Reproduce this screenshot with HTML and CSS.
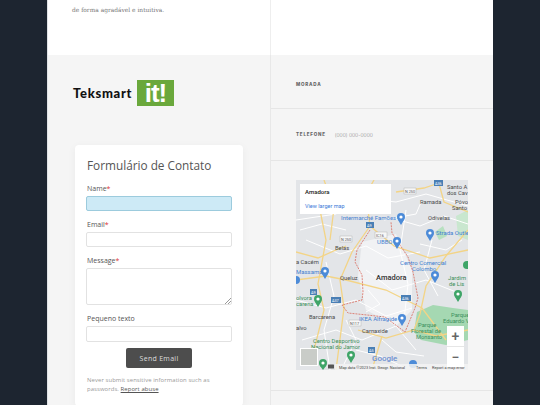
FILE: index.html
```html
<!DOCTYPE html>
<html lang="pt">

<head>
    <meta charset="UTF-8">
    <meta name="viewport" content="width=device-width, initial-scale=1.0">
    <title>Formulário de Contato</title>
    <link rel="stylesheet" href="styles.css">
</head>

<body>
    <div class="page">
        <div class="intro">
            <p class="intro-text">de forma agradável e intuitiva.</p>
        </div>
        <div class="intro intro-empty"></div>

        <div class="contact">
            <div class="logo">
                <span class="logo-name">Teksmart</span>
                <span class="logo-badge">it!</span>
            </div>
            <form class="card">
                <h2 class="card-title">Formulário de Contato</h2>
                <label class="field-label">Name<span class="req">*</span></label>
                <div class="input"></div>
                <label class="field-label">Email<span class="req">*</span></label>
                <div class="input input-plain"></div>
                <label class="field-label">Message<span class="req">*</span></label>
                <div class="input input-area">
                    <svg class="grip" width="6" height="6" viewBox="0 0 6 6">
                        <path d="M0 6L6 0M3 6L6 3" stroke="#999" stroke-width="1" />
                    </svg>
                </div>
                <label class="field-label">Pequeno texto</label>
                <div class="input input-small"></div>
                <div class="send-row"><button class="send-btn" type="button">Send Email</button></div>
                <p class="note">Never submit sensitive information such as passwords. <a href="#">Report abuse</a></p>
            </form>
        </div>

        <div class="details">
            <div class="info-row info-first"><span class="info-label">MORADA</span></div>
            <div class="info-row"><span class="info-label">TELEFONE</span><span class="info-value">(000) 000-0000</span></div>
            <div class="map-row">
                <div class="map">
                    <svg class="map-art" width="172" height="190" viewBox="0 0 172 190">
                        <rect width="172" height="190" fill="#e3e5e8" />
                        <!-- parques -->
                        <path d="M118 152L121 132L137 125L157 128L172 130V160L150 165L125 160Z" fill="#a5d8b2" />
                        <path d="M139 52L147 46L151 56L143 60Z" fill="#b7e0c0" />
                        <path d="M160 36L172 30V60L162 56Z" fill="#c9e7cf" />
                        <path d="M66 62L100 54L116 90L116 130L100 146L70 130L62 96Z" fill="#f1f2f4" />
                        <!-- ruas pequenas -->
                        <g fill="none" stroke="#fff" stroke-width="1">
                            <path d="M0 40L40 34L62 18L100 22L130 14L172 26" />
                            <path d="M96 38L124 46L148 36L172 44" />
                            <path d="M10 60L44 74L70 66L92 78L124 72" />
                            <path d="M0 120L30 128L60 120L90 136L116 128" />
                            <path d="M6 160L40 150L66 160L100 146L120 170" />
                            <path d="M70 90L96 110L130 100L160 112" />
                            <path d="M110 30L104 70L112 104L108 140" />
                            <path d="M30 82L38 116L28 150L34 190" />
                            <path d="M136 60L128 90L142 116" />
                            <path d="M60 170L84 176L110 188" />
                            <path d="M88 40L120 34L126 20" />
                            <path d="M4 50L26 44L50 50" />
                            <path d="M72 110L84 124L70 132" />
                            <path d="M124 64L150 70L166 60" />
                            <path d="M50 140L60 160L48 184" />
                            <path d="M86 160L100 172L128 176" />
                        </g>
                        <!-- estradas -->
                        <g fill="none" stroke="#f3d486" stroke-width="1.3">
                            <path d="M74 46L70 14L78 0" />
                            <path d="M74 46L56 72L44 100L48 128L40 190" />
                            <path d="M74 46L86 56L98 66L134 78L172 70" />
                            <path d="M0 72L22 78L40 70L50 66" />
                            <path d="M0 100L30 96L50 100L90 110L126 128L150 160" />
                            <path d="M142 0L148 22L172 32" />
                            <path d="M100 12L128 8L140 4" />
                            <path d="M172 50L150 76L130 106L124 134L118 150" />
                            <path d="M24 30L30 60L22 104L28 130L18 170" />
                            <path d="M62 150L90 158L118 150L140 156L172 150" />
                            <path d="M86 156L76 190" />
                            <path d="M28 0L38 28L34 60" />
                        </g>
                        <!-- limite de Amadora -->
                        <path d="M74 50L61 70L59 82L66 95L67 112L66 120L46 125L52 133L71 135L89 137L109 152L119 128L122 118L117 92L112 77L104 65L96 53L95 42" fill="none" stroke="#d9695c" stroke-width="0.8" stroke-dasharray="2 1" />
                        <!-- sinais -->
                        <g class="map-shield">
                            <rect x="138" y="0" width="9" height="6" fill="#4a7fb5" />
                            <rect x="70" y="42" width="8" height="6" fill="#4a7fb5" />
                            <rect x="35" y="117" width="10" height="6" fill="#4a7fb5" />
                            <rect x="105" y="115" width="10" height="6" fill="#4a7fb5" />
                            <rect x="14" y="109" width="7" height="6" fill="#4a7fb5" />
                            <rect x="72" y="167" width="7" height="6" fill="#4a7fb5" />
                            <text class="shield-light" x="139" y="4.6">A36</text>
                            <text class="shield-light" x="71" y="46.6">A9</text>
                            <text class="shield-light" x="36" y="121.6">A37</text>
                            <text class="shield-light" x="106" y="119.6">A36</text>
                            <text class="shield-light" x="15" y="113.6">A9</text>
                            <text class="shield-light" x="73" y="171.6">A5</text>
                            <rect x="79" y="52" width="12" height="6" fill="#f7f7f7" stroke="#aaa" stroke-width="0.4" />
                            <rect x="44" y="56" width="12" height="6" fill="#f7f7f7" stroke="#aaa" stroke-width="0.4" />
                            <rect x="108" y="8" width="12" height="6" fill="#f7f7f7" stroke="#aaa" stroke-width="0.4" />
                            <rect x="53" y="140" width="12" height="6" fill="#f7f7f7" stroke="#aaa" stroke-width="0.4" />
                            <text class="shield-dark" x="80" y="56.6">IC16</text>
                            <text class="shield-dark" x="45" y="60.6">N 250</text>
                            <text class="shield-dark" x="109" y="12.6">N 250</text>
                            <text class="shield-dark" x="54" y="144.6">N117</text>
                        </g>
                        <!-- pins -->
                        <g fill="#4c8bd8">
                            <circle cx="105" cy="37" r="4" /><path d="M102 40L105 45L108 40Z" />
                            <circle cx="134" cy="53" r="4" /><path d="M131 56L134 61L137 56Z" />
                            <circle cx="101" cy="61" r="4" /><path d="M98 64L101 69L104 64Z" />
                            <circle cx="29" cy="91" r="4" /><path d="M26 94L29 99L32 94Z" />
                            <circle cx="106" cy="138" r="4" /><path d="M103 141L106 146L109 141Z" />
                            <circle cx="139" cy="95" r="4" /><path d="M136 98L139 103L142 98Z" />
                            <circle cx="0" cy="100" r="4" />
                            <circle cx="117" cy="184" r="4" />
                        </g>
                        <g fill="#3fa568">
                            <circle cx="22" cy="119" r="4" /><path d="M19 122L22 127L25 122Z" />
                            <circle cx="162" cy="114" r="4" /><path d="M159 117L162 122L165 117Z" />
                            <circle cx="55" cy="175" r="4" /><path d="M52 178L55 183L58 178Z" />
                            <circle cx="27" cy="183" r="4" /><path d="M24 186L27 190L30 186Z" />
                            <circle cx="171" cy="85" r="4" />
                        </g>
                        <g fill="#fff">
                            <circle cx="105" cy="37" r="1.6" /><circle cx="134" cy="53" r="1.6" />
                            <circle cx="101" cy="61" r="1.6" /><circle cx="29" cy="91" r="1.6" />
                            <circle cx="106" cy="138" r="1.6" /><circle cx="22" cy="119" r="1.6" />
                            <circle cx="162" cy="114" r="1.6" /><circle cx="55" cy="175" r="1.6" />
                            <circle cx="27" cy="183" r="1.6" /><circle cx="139" cy="95" r="1.6" />
                        </g>
                        <!-- nomes -->
                        <g class="map-town">
                            <text x="151" y="9">Santo A</text>
                            <text x="151" y="15">dos Cav</text>
                            <text x="124" y="24">Ramada</text>
                            <text x="159" y="24">Póvo</text>
                            <text x="156" y="30">Santo</text>
                            <text x="132" y="40">Odivelas</text>
                            <text x="39" y="70">Belas</text>
                            <text x="44" y="100">Queluz</text>
                            <text x="13" y="139">Barcarena</text>
                            <text x="66" y="153">Carnaxide</text>
                            <text x="0" y="84">a Cacém</text>
                            <text x="0" y="150">alvo</text>
                        </g>
                        <text class="map-big" x="80" y="100">Amadora</text>
                        <g class="map-blue">
                            <text x="45" y="40">Intermarché Famões</text>
                            <text x="140" y="55">Strada Outle</text>
                            <text x="81" y="64">UBBO</text>
                            <text x="104" y="85">Centro Comercial</text>
                            <text x="116" y="91">Colombo</text>
                            <text x="63" y="141">IKEA Alfragide</text>
                            <text x="0" y="94">Massamá</text>
                        </g>
                        <g class="map-green">
                            <text x="0" y="120">olvora</text>
                            <text x="0" y="126">carena</text>
                            <text x="152" y="100">Jardim</text>
                            <text x="153" y="106">de Lis</text>
                            <text x="155" y="137">Parque</text>
                            <text x="147" y="143">Eduardo V</text>
                            <text x="122" y="147">Parque</text>
                            <text x="115" y="153">Florestal de</text>
                            <text x="120" y="159">Monsanto</text>
                            <text x="17" y="163">Centro Desportivo</text>
                            <text x="15" y="169">Nacional do Jamor</text>
                        </g>
                        <text class="map-google" x="76" y="181">Google</text>
                        <!-- atribuicao -->
                        <rect x="39" y="184" width="133" height="6" fill="#f3f3f3" fill-opacity="0.85" />
                        <g class="map-attr">
                            <text x="43" y="189">Map data ©2023 Inst. Geogr. Nacional</text>
                            <text x="120" y="189">Terms</text>
                            <text x="136" y="189">Report a map error</text>
                        </g>
                        <rect x="32" y="184.5" width="6" height="4" rx="0.5" fill="#555" />
                    </svg>
                    <div class="map-card">
                        <span class="map-card-title">Amadora</span>
                        <a class="map-card-link" href="#">View larger map</a>
                    </div>
                    <div class="map-thumb"></div>
                    <div class="map-zoom">
                        <span class="zoom-btn">+</span>
                        <span class="zoom-btn">−</span>
                    </div>
                </div>
            </div>
            <div class="info-end"></div>
        </div>
    </div>
</body>

</html>
```

FILE: styles.css
```css
html,
body {
    height: 405px;
    overflow: hidden;
}

body {
    margin: 0;
    background-color: #1d2530;
    font-family: 'Open Sans', sans-serif;
}

.page {
    width: 446px;
    height: 405px;
    margin-left: 47px;
    display: grid;
    grid-template-columns: 223px 223px;
    grid-template-rows: 55px 350px;
    overflow: hidden;
    background-color: #f5f5f5;
}

.intro {
    background-color: #fff;
    border-left: 1px solid #dfe2e5;
}

.intro-empty {
    border-left: 1px solid #eee;
}

.intro-text {
    margin: 5px 0 0 24px;
    font-family: 'DejaVu Serif', serif;
    font-size: 5.9px;
    line-height: 10px;
    color: #777;
}

.contact {
    padding: 25px 0 0 25px;
    border-left: 1px solid #dfe2e5;
}

.logo {
    display: flex;
    align-items: center;
    height: 26px;
}

.logo-name {
    width: 64px;
    font-family: 'Lato', sans-serif;
    font-weight: 900;
    font-size: 13px;
    letter-spacing: 0.7px;
    color: #111;
}

.logo-badge {
    width: 37px;
    height: 26px;
    background-color: #6aa83c;
    color: #fff;
    font-family: 'Liberation Sans', sans-serif;
    font-weight: 700;
    font-size: 26px;
    line-height: 26px;
    text-align: center;
    letter-spacing: -1px;
}

.card {
    width: 146px;
    margin: 39px 0 0 2px;
    padding: 11px 11px 12px;
    background-color: #fff;
    border-radius: 4px;
    box-shadow: 0 2px 8px rgba(0, 0, 0, 0.05);
}

.card-title {
    margin: 0 0 11px;
    padding-left: 1px;
    font-weight: 400;
    font-size: 11.8px;
    line-height: 18px;
    color: #555;
}

.field-label {
    display: block;
    height: 8px;
    margin-bottom: 3px;
    padding-left: 1px;
    font-size: 7px;
    line-height: 8px;
    color: #555;
}

.req {
    color: #d33;
}

.input {
    position: relative;
    height: 13px;
    margin-bottom: 10px;
    background-color: #cdeaf6;
    border: 1px solid #9ccbdd;
    border-radius: 2px;
}

.input-plain,
.input-area,
.input-small {
    background-color: #fff;
    border-color: #e2e2e2;
}

.input-area {
    height: 35px;
}

.input-small {
    height: 14px;
    margin-bottom: 6px;
}

.grip {
    position: absolute;
    right: 0;
    bottom: 0;
}

.send-row {
    display: flex;
    justify-content: center;
}

.send-btn {
    width: 66px;
    height: 20px;
    padding: 0;
    background-color: #4d4d4d;
    border: none;
    border-radius: 2px;
    color: #ddd;
    font-family: 'Open Sans', sans-serif;
    font-size: 7px;
    letter-spacing: 0.3px;
}

.note {
    margin: 8px 0 0;
    padding-left: 1px;
    font-size: 5.9px;
    line-height: 9px;
    letter-spacing: 0.1px;
    color: #999;
}

.note a {
    color: #555;
}

.details {
    display: flex;
    flex-direction: column;
    border-left: 1px solid #e8e8e8;
}

.info-row {
    display: flex;
    align-items: center;
    height: 51px;
    padding-left: 25px;
    border-bottom: 1px solid #e6e6e6;
}

.info-first {
    padding-top: 5px;
    box-sizing: border-box;
    height: 54px;
}

.info-label {
    font-family: 'Inter', sans-serif;
    font-weight: 800;
    font-size: 4.5px;
    letter-spacing: 0.8px;
    color: #666;
}

.info-value {
    margin-left: 9px;
    font-family: 'Inter', sans-serif;
    font-weight: 300;
    font-size: 5px;
    color: #888;
}

.map-row {
    padding: 19px 25px 0;
    box-sizing: border-box;
    height: 230px;
    border-bottom: 1px solid #e6e6e6;
}

.map {
    position: relative;
    width: 172px;
    height: 190px;
    overflow: hidden;
}

.map-art {
    display: block;
}

.shield-light,
.shield-dark {
    font-family: 'Roboto', sans-serif;
    font-size: 3.8px;
}

.shield-light {
    fill: #fff;
}

.shield-dark {
    fill: #555;
}

.map-town {
    font-family: 'Roboto', sans-serif;
    font-size: 5.8px;
    fill: #4a4a4a;
}

.map-big {
    font-family: 'Roboto', sans-serif;
    font-weight: 500;
    font-size: 7.5px;
    fill: #333;
}

.map-blue {
    font-family: 'Roboto', sans-serif;
    font-size: 6px;
    fill: #3f7fd0;
}

.map-green {
    font-family: 'Roboto', sans-serif;
    font-size: 5.8px;
    fill: #3b8f5b;
}

.map-google {
    font-family: 'Roboto', sans-serif;
    font-weight: 500;
    font-size: 8px;
    fill: #6c8fd0;
}

.map-attr {
    font-family: 'Roboto', sans-serif;
    font-size: 3.9px;
    fill: #444;
}

.map-card {
    position: absolute;
    left: 4px;
    top: 4px;
    width: 91px;
    height: 30px;
    padding: 4px 5px;
    box-sizing: border-box;
    display: flex;
    flex-direction: column;
    justify-content: space-between;
    background-color: #fff;
}

.map-card-title {
    font-family: 'Roboto', sans-serif;
    font-weight: 500;
    font-size: 6px;
    line-height: 8px;
    color: #222;
}

.map-card-link {
    font-family: 'Roboto', sans-serif;
    font-size: 5.5px;
    line-height: 8px;
    color: #3a78d8;
    text-decoration: none;
}

.map-thumb {
    position: absolute;
    left: 4px;
    bottom: 4px;
    width: 18px;
    height: 18px;
    background-color: #c9ccc8;
    border: 1px solid #fff;
    box-sizing: border-box;
}

.map-zoom {
    position: absolute;
    right: 4px;
    bottom: 3px;
    width: 17px;
    height: 41px;
    display: flex;
    flex-direction: column;
    background-color: #fff;
}

.zoom-btn {
    flex: 1;
    display: flex;
    align-items: center;
    justify-content: center;
    font-family: 'Roboto', sans-serif;
    font-weight: 500;
    font-size: 14px;
    color: #666;
}

.zoom-btn + .zoom-btn {
    border-top: 1px solid #e6e6e6;
}

.info-end {
    flex: 1;
}
```
